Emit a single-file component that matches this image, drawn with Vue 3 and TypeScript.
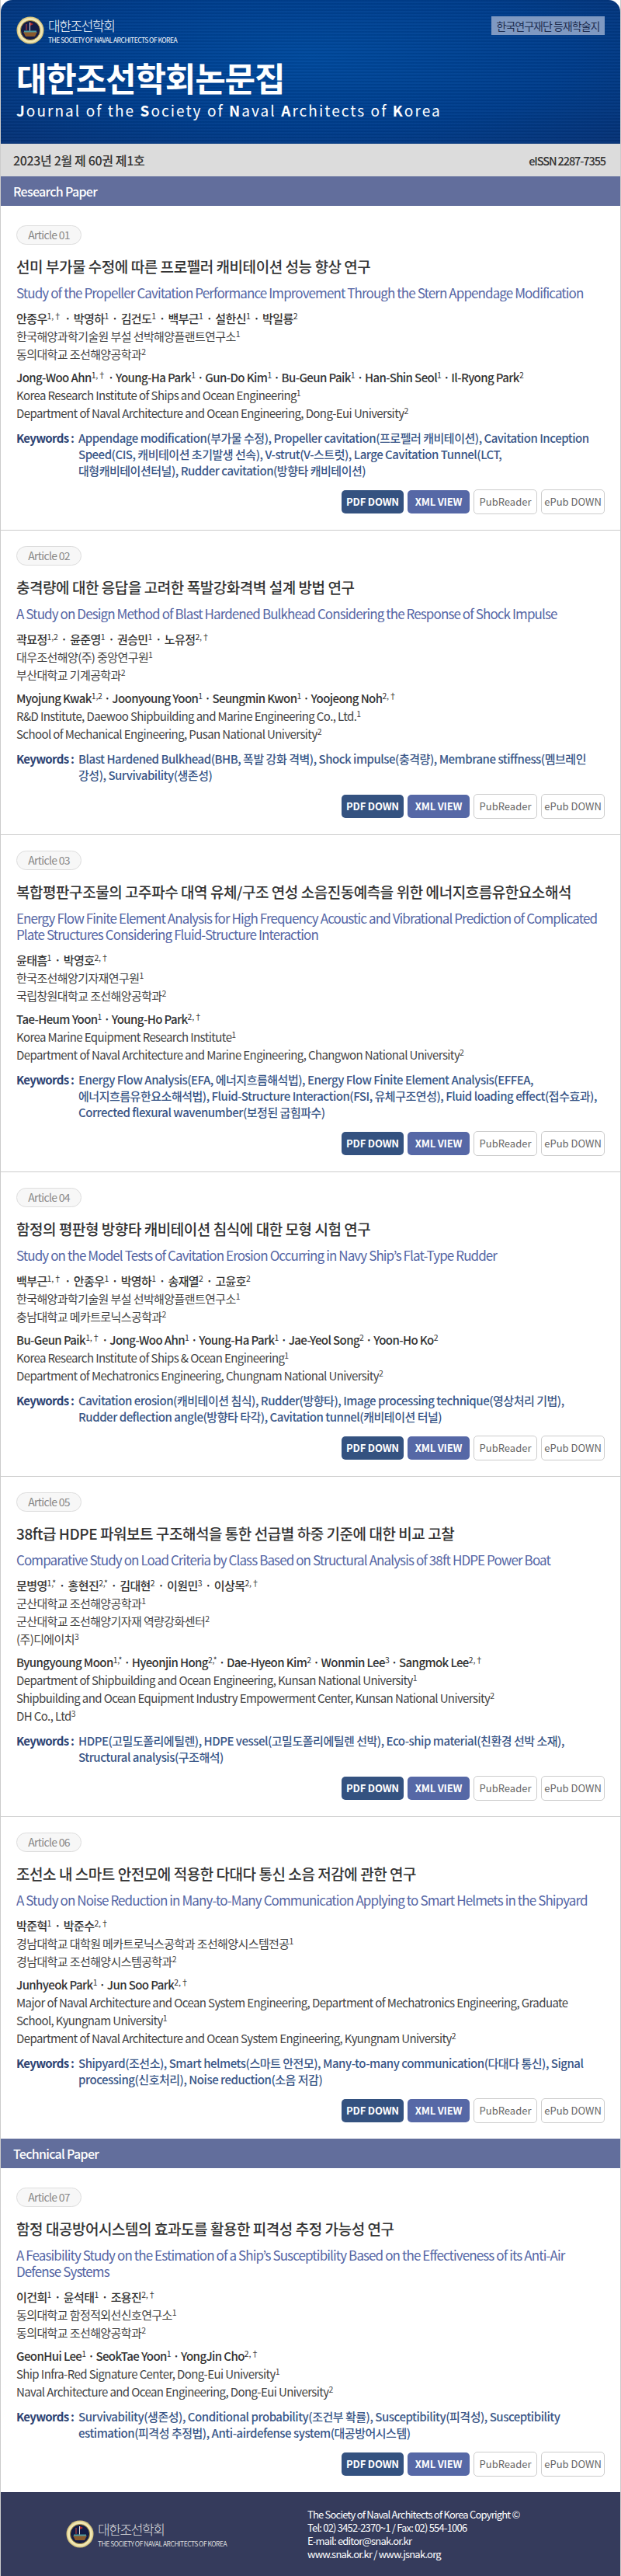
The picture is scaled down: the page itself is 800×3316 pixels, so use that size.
<script setup lang="ts">
interface Person { name: string; sup: string }
interface Article {
  no: string
  title: string
  english: string
  authorsKo: Person[]
  affKo: Person[]
  authorsEn: Person[]
  affEn: Person[]
  keywords: string
}

const p = (name: string, sup: string): Person => ({ name, sup })

const research: Article[] = [
  {
    no: '01',
    title: '선미 부가물 수정에 따른 프로펠러 캐비테이션 성능 향상 연구',
    english: 'Study of the Propeller Cavitation Performance Improvement Through the Stern Appendage Modification',
    authorsKo: [p('안종우', '1,†'), p('박영하', '1'), p('김건도', '1'), p('백부근', '1'), p('설한신', '1'), p('박일룡', '2')],
    affKo: [p('한국해양과학기술원 부설 선박해양플랜트연구소', '1'), p('동의대학교 조선해양공학과', '2')],
    authorsEn: [p('Jong-Woo Ahn', '1,†'), p('Young-Ha Park', '1'), p('Gun-Do Kim', '1'), p('Bu-Geun Paik', '1'), p('Han-Shin Seol', '1'), p('Il-Ryong Park', '2')],
    affEn: [p('Korea Research Institute of Ships and Ocean Engineering', '1'), p('Department of Naval Architecture and Ocean Engineering, Dong-Eui University', '2')],
    keywords: 'Appendage modification(부가물 수정), Propeller cavitation(프로펠러 캐비테이션), Cavitation Inception Speed(CIS, 캐비테이션 초기발생 선속), V-strut(V-스트럿), Large Cavitation Tunnel(LCT, 대형캐비테이션터널), Rudder cavitation(방향타 캐비테이션)',
  },
  {
    no: '02',
    title: '충격량에 대한 응답을 고려한 폭발강화격벽 설계 방법 연구',
    english: 'A Study on Design Method of Blast Hardened Bulkhead Considering the Response of Shock Impulse',
    authorsKo: [p('곽묘정', '1,2'), p('윤준영', '1'), p('권승민', '1'), p('노유정', '2,†')],
    affKo: [p('대우조선해양(주) 중앙연구원', '1'), p('부산대학교 기계공학과', '2')],
    authorsEn: [p('Myojung Kwak', '1,2'), p('Joonyoung Yoon', '1'), p('Seungmin Kwon', '1'), p('Yoojeong Noh', '2,†')],
    affEn: [p('R&D Institute, Daewoo Shipbuilding and Marine Engineering Co., Ltd.', '1'), p('School of Mechanical Engineering, Pusan National University', '2')],
    keywords: 'Blast Hardened Bulkhead(BHB, 폭발 강화 격벽), Shock impulse(충격량), Membrane stiffness(멤브레인 강성), Survivability(생존성)',
  },
  {
    no: '03',
    title: '복합평판구조물의 고주파수 대역 유체/구조 연성 소음진동예측을 위한 에너지흐름유한요소해석',
    english: 'Energy Flow Finite Element Analysis for High Frequency Acoustic and Vibrational Prediction of Complicated Plate Structures Considering Fluid-Structure Interaction',
    authorsKo: [p('윤태흠', '1'), p('박영호', '2,†')],
    affKo: [p('한국조선해양기자재연구원', '1'), p('국립창원대학교 조선해양공학과', '2')],
    authorsEn: [p('Tae-Heum Yoon', '1'), p('Young-Ho Park', '2,†')],
    affEn: [p('Korea Marine Equipment Research Institute', '1'), p('Department of Naval Architecture and Marine Engineering, Changwon National University', '2')],
    keywords: 'Energy Flow Analysis(EFA, 에너지흐름해석법), Energy Flow Finite Element Analysis(EFFEA, 에너지흐름유한요소해석법), Fluid-Structure Interaction(FSI, 유체구조연성), Fluid loading effect(접수효과), Corrected flexural wavenumber(보정된 굽힘파수)',
  },
  {
    no: '04',
    title: '함정의 평판형 방향타 캐비테이션 침식에 대한 모형 시험 연구',
    english: 'Study on the Model Tests of Cavitation Erosion Occurring in Navy Ship’s Flat-Type Rudder',
    authorsKo: [p('백부근', '1,†'), p('안종우', '1'), p('박영하', '1'), p('송재열', '2'), p('고윤호', '2')],
    affKo: [p('한국해양과학기술원 부설 선박해양플랜트연구소', '1'), p('충남대학교 메카트로닉스공학과', '2')],
    authorsEn: [p('Bu-Geun Paik', '1,†'), p('Jong-Woo Ahn', '1'), p('Young-Ha Park', '1'), p('Jae-Yeol Song', '2'), p('Yoon-Ho Ko', '2')],
    affEn: [p('Korea Research Institute of Ships & Ocean Engineering', '1'), p('Department of Mechatronics Engineering, Chungnam National University', '2')],
    keywords: 'Cavitation erosion(캐비테이션 침식), Rudder(방향타), Image processing technique(영상처리 기법), Rudder deflection angle(방향타 타각), Cavitation tunnel(캐비테이션 터널)',
  },
  {
    no: '05',
    title: '38ft급 HDPE 파워보트 구조해석을 통한 선급별 하중 기준에 대한 비교 고찰',
    english: 'Comparative Study on Load Criteria by Class Based on Structural Analysis of 38ft HDPE Power Boat',
    authorsKo: [p('문병영', '1,*'), p('홍현진', '2,*'), p('김대현', '2'), p('이원민', '3'), p('이상목', '2,†')],
    affKo: [p('군산대학교 조선해양공학과', '1'), p('군산대학교 조선해양기자재 역량강화센터', '2'), p('(주)디에이치', '3')],
    authorsEn: [p('Byungyoung Moon', '1,*'), p('Hyeonjin Hong', '2,*'), p('Dae-Hyeon Kim', '2'), p('Wonmin Lee', '3'), p('Sangmok Lee', '2,†')],
    affEn: [p('Department of Shipbuilding and Ocean Engineering, Kunsan National University', '1'), p('Shipbuilding and Ocean Equipment Industry Empowerment Center, Kunsan National University', '2'), p('DH Co., Ltd', '3')],
    keywords: 'HDPE(고밀도폴리에틸렌), HDPE vessel(고밀도폴리에틸렌 선박), Eco-ship material(친환경 선박 소재), Structural analysis(구조해석)',
  },
  {
    no: '06',
    title: '조선소 내 스마트 안전모에 적용한 다대다 통신 소음 저감에 관한 연구',
    english: 'A Study on Noise Reduction in Many-to-Many Communication Applying to Smart Helmets in the Shipyard',
    authorsKo: [p('박준혁', '1'), p('박준수', '2,†')],
    affKo: [p('경남대학교 대학원 메카트로닉스공학과 조선해양시스템전공', '1'), p('경남대학교 조선해양시스템공학과', '2')],
    authorsEn: [p('Junhyeok Park', '1'), p('Jun Soo Park', '2,†')],
    affEn: [p('Major of Naval Architecture and Ocean System Engineering, Department of Mechatronics Engineering, Graduate School, Kyungnam University', '1'), p('Department of Naval Architecture and Ocean System Engineering, Kyungnam University', '2')],
    keywords: 'Shipyard(조선소), Smart helmets(스마트 안전모), Many-to-many communication(다대다 통신), Signal processing(신호처리), Noise reduction(소음 저감)',
  },
]

const technical: Article[] = [
  {
    no: '07',
    title: '함정 대공방어시스템의 효과도를 활용한 피격성 추정 가능성 연구',
    english: 'A Feasibility Study on the Estimation of a Ship’s Susceptibility Based on the Effectiveness of its Anti-Air Defense Systems',
    authorsKo: [p('이건희', '1'), p('윤석태', '1'), p('조용진', '2,†')],
    affKo: [p('동의대학교 함정적외선신호연구소', '1'), p('동의대학교 조선해양공학과', '2')],
    authorsEn: [p('GeonHui Lee', '1'), p('SeokTae Yoon', '1'), p('YongJin Cho', '2,†')],
    affEn: [p('Ship Infra-Red Signature Center, Dong-Eui University', '1'), p('Naval Architecture and Ocean Engineering, Dong-Eui University', '2')],
    keywords: 'Survivability(생존성), Conditional probability(조건부 확률), Susceptibility(피격성), Susceptibility estimation(피격성 추정법), Anti-airdefense system(대공방어시스템)',
  },
]

const sections = [
  { name: 'Research Paper', items: research },
  { name: 'Technical Paper', items: technical },
]

const subtitle = [
  { t: 'J', b: true }, { t: 'ournal of the ', b: false },
  { t: 'S', b: true }, { t: 'ociety of ', b: false },
  { t: 'N', b: true }, { t: 'aval ', b: false },
  { t: 'A', b: true }, { t: 'rchitects of ', b: false },
  { t: 'K', b: true }, { t: 'orea', b: false },
]
</script>

<template>
  <div class="page">
    <header class="top">
      <div class="top-row">
        <div class="brand">
          <svg class="seal" viewBox="0 0 36 36">
            <circle cx="18" cy="18" r="17.5" fill="#d8c680" />
            <circle cx="18" cy="18" r="16" fill="#efe6b4" />
            <circle cx="18" cy="18" r="12.6" fill="#141c46" stroke="#b59a45" />
            <path d="M9 20h18l-3 6H12z" fill="#8a5a2c" />
            <path d="M10 18.5h16v2H10z" fill="#4f9aa0" />
            <path d="M17.5 8v10.5" stroke="#ddd" />
            <path d="M18 8l4 2-4 2z" fill="#b52a2a" />
            <path d="M13 10v8" stroke="#c9463e" />
          </svg>
          <div class="brand-text">
            <div class="brand-ko">대한조선학회</div>
            <div class="brand-en">THE SOCIETY OF NAVAL ARCHITECTS OF KOREA</div>
          </div>
        </div>
        <div class="badge">한국연구재단 등재학술지</div>
      </div>
      <h1>대한조선학회논문집</h1>
      <div class="sub">
        <template v-for="s in subtitle"><b v-if="s.b">{{ s.t }}</b><template v-else>{{ s.t }}</template></template>
      </div>
    </header>

    <div class="issue">
      <span class="issue-no">2023년 2월 제 60권 제1호</span>
      <span class="issn">eISSN 2287-7355</span>
    </div>

    <section v-for="sec in sections" :key="sec.name">
      <div class="sec-bar">{{ sec.name }}</div>
      <article v-for="a in sec.items" :key="a.no">
        <div class="pill">Article {{ a.no }}</div>
        <h2>{{ a.title }}</h2>
        <p class="english">{{ a.english }}</p>

        <div class="people ko">
          <div class="names">
            <template v-for="(n, i) in a.authorsKo" :key="n.name"><span v-if="i" class="dot"> · </span>{{ n.name }}<sup>{{ n.sup }}</sup></template>
          </div>
          <div v-for="f in a.affKo" :key="f.name" class="aff">{{ f.name }}<sup>{{ f.sup }}</sup></div>
        </div>

        <div class="people en">
          <div class="names">
            <template v-for="(n, i) in a.authorsEn" :key="n.name"><span v-if="i" class="dot"> · </span>{{ n.name }}<sup>{{ n.sup }}</sup></template>
          </div>
          <div v-for="f in a.affEn" :key="f.name" class="aff">{{ f.name }}<sup>{{ f.sup }}</sup></div>
        </div>

        <div class="keywords">
          <div class="kw-label">Keywords :</div>
          <div class="kw-text">{{ a.keywords }}</div>
        </div>

        <div class="btns">
          <a class="btn pdf">PDF DOWN</a>
          <a class="btn xml">XML VIEW</a>
          <a class="btn line">PubReader</a>
          <a class="btn line">ePub DOWN</a>
        </div>
      </article>
    </section>

    <footer>
      <div class="brand foot-brand">
        <svg class="seal" viewBox="0 0 36 36">
          <circle cx="18" cy="18" r="17.5" fill="#d8c680" />
          <circle cx="18" cy="18" r="16" fill="#efe6b4" />
          <circle cx="18" cy="18" r="12.6" fill="#141c46" stroke="#b59a45" />
          <path d="M9 20h18l-3 6H12z" fill="#8a5a2c" />
          <path d="M10 18.5h16v2H10z" fill="#4f9aa0" />
          <path d="M17.5 8v10.5" stroke="#ddd" />
          <path d="M18 8l4 2-4 2z" fill="#b52a2a" />
          <path d="M13 10v8" stroke="#c9463e" />
        </svg>
        <div class="brand-text">
          <div class="brand-ko">대한조선학회</div>
          <div class="brand-en">THE SOCIETY OF NAVAL ARCHITECTS OF KOREA</div>
        </div>
      </div>
      <div class="contact">
        <div>The Society of Naval Architects of Korea Copyright ©</div>
        <div>Tel: 02) 3452-2370~1 / Fax: 02) 554-1006</div>
        <div>E-mail: editor@snak.or.kr</div>
        <div>www.snak.or.kr / www.jsnak.org</div>
      </div>
    </footer>
  </div>
</template>

<style>
body {
  margin: 0;
  background: #fff;
}
</style>

<style scoped>
.page {
  width: 800px;
  box-sizing: border-box;
  border-left: 1px solid #ccc;
  border-right: 1px solid #ccc;
  font-family: "Noto Sans CJK KR", "Noto Sans", sans-serif;
  color: #333;
}
.top {
  height: 185px;
  box-sizing: border-box;
  padding: 21px 20px 0 20px;
  border-radius: 15px 15px 0 0;
  color: #fff;
  background:
    repeating-linear-gradient(180deg, rgba(0, 0, 0, 0.06) 0 2px, rgba(255, 255, 255, 0.02) 2px 4px),
    radial-gradient(ellipse at 50% 40%, #004a9e 0%, #003d8c 60%, #063276 100%);
}
.top-row {
  display: flex;
  justify-content: space-between;
  align-items: flex-start;
}
.brand {
  display: flex;
  align-items: center;
  gap: 5px;
}
.seal {
  width: 36px;
  height: 36px;
  flex: none;
}
.brand-ko {
  font-size: 17px;
  font-weight: 300;
  line-height: 22px;
  letter-spacing: -1.4px;
}
.brand-en {
  font-size: 8.5px;
  line-height: 12px;
  letter-spacing: -0.5px;
  margin-top: 1px;
  white-space: nowrap;
}
.badge {
  width: 146px;
  height: 24px;
  line-height: 24px;
  text-align: center;
  font-size: 14px;
  letter-spacing: -1px;
  color: #1d2c4e;
  background: #7f99c2;
}
h1 {
  margin: 18px 0 0;
  font-size: 43px;
  font-weight: 700;
  line-height: 48px;
  letter-spacing: -1.2px;
}
.sub {
  font-size: 19px;
  line-height: 28px;
  letter-spacing: 2.06px;
  margin-top: 5px;
  white-space: nowrap;
}
.issue {
  height: 42px;
  box-sizing: border-box;
  padding: 0 19px 0 16px;
  display: flex;
  justify-content: space-between;
  align-items: center;
  background: #dcdcdc;
  font-weight: 500;
}
.issue-no {
  font-size: 16px;
  letter-spacing: -0.35px;
}
.issn {
  font-size: 14.5px;
  letter-spacing: -1.1px;
}
.sec-bar {
  height: 38px;
  line-height: 38px;
  padding-left: 16px;
  margin-bottom: 5px;
  background: #626e9c;
  color: #fff;
  font-size: 16px;
  font-weight: 500;
  letter-spacing: -0.7px;
}
article {
  padding: 20px;
  border-bottom: 1px solid #ccc;
}
section article:last-child {
  border-bottom: 0;
}
.pill {
  width: 84px;
  height: 25px;
  box-sizing: border-box;
  line-height: 23px;
  text-align: center;
  font-size: 14px;
  letter-spacing: -0.7px;
  color: #888;
  background: #f7f7f7;
  border: 1px solid #ddd;
  border-radius: 13px;
}
h2 {
  margin: 16px 0 0;
  font-size: 19px;
  font-weight: 500;
  line-height: 24px;
  letter-spacing: -0.45px;
  color: #333;
}
.english {
  margin: 11px 0 0;
  font-size: 17px;
  line-height: 21px;
  letter-spacing: -0.9px;
  color: #5566a5;
}
.people {
  margin-top: 11px;
  font-size: 15px;
  line-height: 23px;
  letter-spacing: -0.6px;
}
.people.en {
  margin-top: 7px;
}
.names {
  font-weight: 500;
  color: #333;
}
.ko .dot {
  margin: 0 1px;
}
.en .dot {
  margin: 0 -0.5px;
}
.aff {
  color: #444;
}
sup {
  font-size: 10.5px;
  line-height: 0;
  vertical-align: 5px;
  font-weight: 400;
  letter-spacing: -0.2px;
}
.keywords {
  margin-top: 10px;
  display: flex;
  font-size: 15px;
  line-height: 21px;
  letter-spacing: -0.7px;
}
.kw-label {
  width: 80px;
  flex: none;
  font-weight: 700;
  color: #2d4373;
}
.kw-text {
  font-weight: 500;
  color: #3a5788;
  letter-spacing: -0.48px;
  padding-right: 9px;
  word-break: keep-all;
}
.btns {
  margin-top: 14px;
  display: flex;
  justify-content: flex-end;
  align-items: center;
  gap: 5px;
}
.btn {
  width: 80px;
  height: 30px;
  line-height: 30px;
  box-sizing: border-box;
  text-align: center;
  font-size: 13px;
  letter-spacing: -0.2px;
  border-radius: 5px;
  color: #fff;
  font-weight: 700;
}
.pdf {
  background: #345280;
}
.xml {
  background: #5668a6;
}
.line {
  width: 82px;
  height: 32px;
  line-height: 30px;
  border: 1px solid #ccc;
  background: #fff;
  color: #666;
  font-weight: 400;
  letter-spacing: 0;
}
footer {
  height: 108px;
  box-sizing: border-box;
  padding: 0 0 0 84px;
  display: flex;
  align-items: center;
  background: #353b5c;
  color: #fff;
}
.foot-brand {
  width: 311px;
  color: #ddd;
}
.contact {
  font-size: 13px;
  line-height: 17px;
  letter-spacing: -0.8px;
}
</style>
